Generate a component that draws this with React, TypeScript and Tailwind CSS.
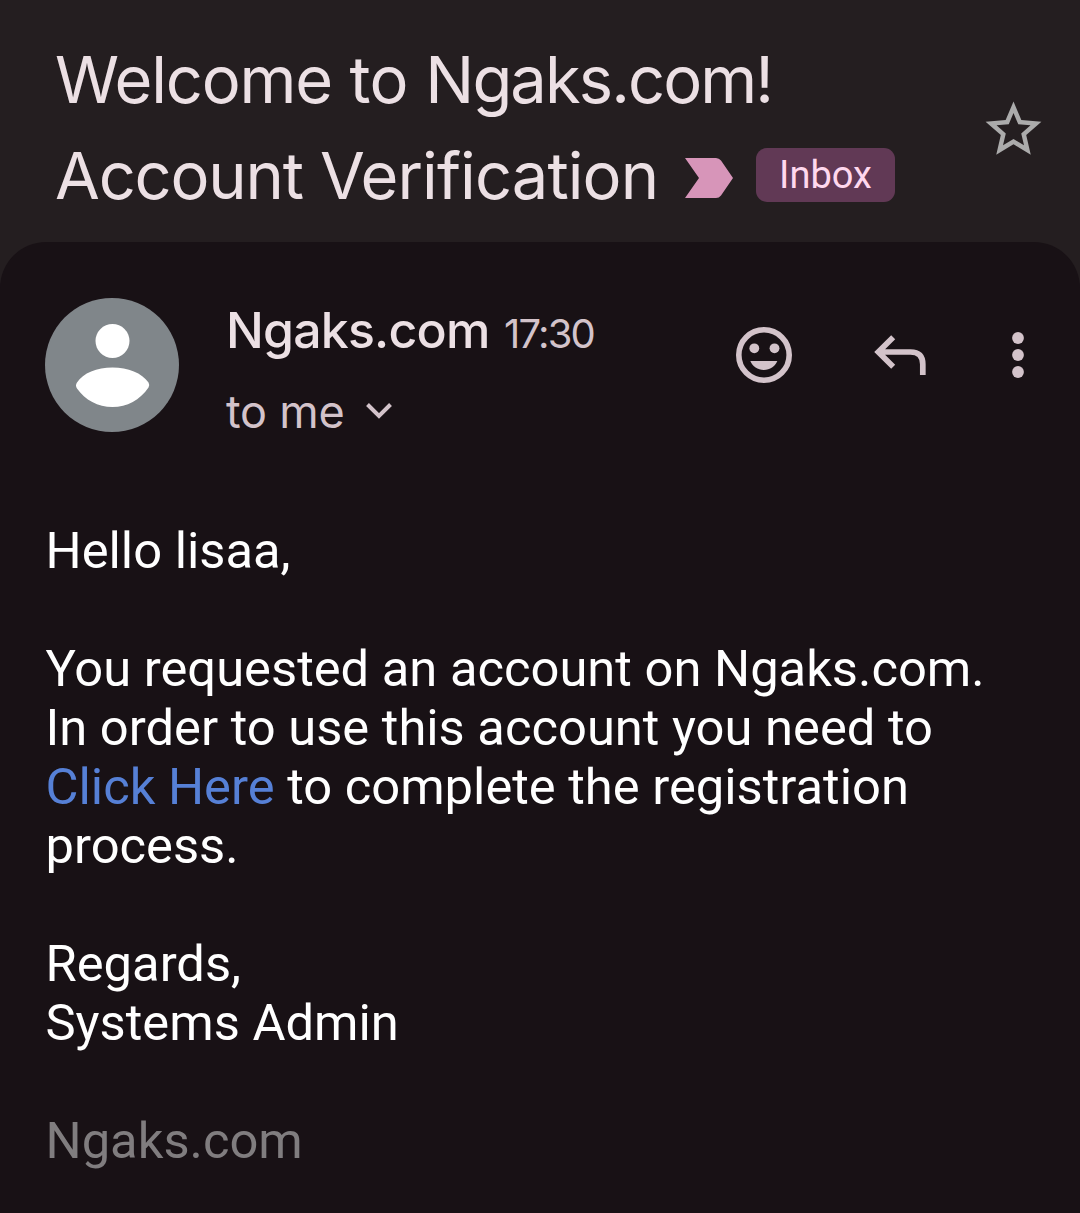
import React from "react";

function Star() {
  return (
    <svg className="h-[67px] w-[67px]" viewBox="0 0 24 24" fill="#ababab">
      <path d="M22 9.24l-7.19-.62L12 2 9.19 8.63 2 9.24l5.46 4.73L5.82 21 12 17.27 18.18 21l-1.63-7.03L22 9.24zM12 15.4l-3.76 2.27 1-4.28-3.32-2.88 4.38-.38L12 6.1l1.71 4.04 4.38.38-3.32 2.88 1 4.28L12 15.4z" />
    </svg>
  );
}

function Avatar() {
  return (
    <svg className="h-[134px] w-[134px] shrink-0" viewBox="0 0 134 134">
      <circle cx="67" cy="67" r="67" fill="#80868a" />
      <circle cx="67.5" cy="43" r="17" fill="#fff" />
      <path d="M32 84.500C38 75 52 69.500 67.500 69.500S97 75 103.500 84.500Q105 87 103.500 89.500C95 102 82 109 67.500 109S40 102 32 90.500Q30 87.500 32 84.500Z" fill="#fff" />
    </svg>
  );
}

function Smiley() {
  return (
    <svg className="h-[56px] w-[56px]" viewBox="0 0 56 56" fill="#d3c3ca">
      <circle cx="28" cy="28" r="25.200" fill="none" stroke="#d3c3ca" strokeWidth="5.600" />
      <circle cx="18.300" cy="21.300" r="4.900" />
      <circle cx="38.500" cy="21.300" r="4.900" />
      <path d="M14.300 34H41.300C39 39.500 34 43 27.800 43S16.600 39.500 14.300 34Z" />
    </svg>
  );
}

function Reply() {
  return (
    <svg className="h-[40px] w-[52px]" viewBox="0 0 52 40" fill="none" stroke="#d3c3ca" strokeWidth="5.700">
      <path d="M19.200 2.200L4.300 17L19.200 31.700M4.300 17H36.500Q48.800 17 48.800 29.300V40" />
    </svg>
  );
}

function More() {
  return (
    <svg className="h-[46px] w-[12px]" viewBox="0 0 12 46" fill="#d3c3ca">
      <circle cx="6" cy="6" r="5.900" />
      <circle cx="6" cy="23" r="5.900" />
      <circle cx="6" cy="40" r="5.900" />
    </svg>
  );
}

export default function App() {
  return (
    <div className="flex h-[1213px] w-[1080px] flex-col overflow-hidden bg-[#241e20] font-['Inter',sans-serif]">
      <header className="flex h-[242px] shrink-0 justify-between pr-[33.500px] pl-[55px] pt-8">
        <h1 className="text-[65px] leading-[96px] font-normal whitespace-nowrap text-[#ece0e4]">
          <div>
            <span className="tracking-[-1.200px]">Welcome</span>
            <span className="tracking-[-0.700px]"> to </span>
            <span className="tracking-[-1.900px]">Ngaks.com!</span>
          </div>
          <div className="flex">
            <span className="w-[630px]">
              <span className="tracking-[-1.200px]">Account </span>
              <span className="tracking-[-0.900px]">Verification</span>
            </span>
            <svg className="mt-[30px] h-[40px] w-[48px]" viewBox="0 0 48 40" fill="#d795b9">
              <path d="M0 0H31Q34 0 36 2.500L48 20L36 37.500Q34 40 31 40H0L14 20Z" />
            </svg>
            <span className="mt-5 ml-[23px] flex h-[54px] w-[139px] items-center justify-center rounded-[11px] bg-[#613955] font-['Roboto',sans-serif] text-[38px] leading-none text-[#ffd8ee]">
              Inbox
            </span>
          </div>
        </h1>
        <div className="pt-[64px]">
          <Star />
        </div>
      </header>

      <main className="grow rounded-t-[46px] bg-[#181115]">
        <section className="flex pt-14 pl-[45px]">
          <Avatar />
          <div className="ml-[47px] w-[509px] whitespace-nowrap">
            <div className="flex items-baseline leading-[64px]">
              <span className="w-[278px] text-[50px] font-medium tracking-[-0.800px] text-[#ece0e4]">Ngaks.com</span>
              <span className="text-[40px] tracking-[-1.800px] text-[#d3c3ca]">17:30</span>
            </div>
            <div className="mt-[14px] flex items-center text-[45px] leading-[64px] text-[#d3c3ca]">
              <span className="w-[140px] tracking-[-0.200px]">to me</span>
              <svg className="mb-[3px] h-[16px] w-[26px]" viewBox="0 0 26 16" fill="none" stroke="#d3c3ca" strokeWidth="4">
                <path d="M1.500 1.500L13 13L24.500 1.500" />
              </svg>
            </div>
          </div>
          <div className="ml-px flex h-[114px] items-center">
            <Smiley />
            <div className="ml-[82px]">
              <Reply />
            </div>
            <div className="ml-[86px]">
              <More />
            </div>
          </div>
        </section>

        <article className="mt-[77px] pl-[45.500px] font-['Roboto',sans-serif] text-[50.700px] leading-[59px] whitespace-nowrap text-white">
          <p>Hello lisaa,</p>
          <p className="mt-[59px]">
            You requested an account on Ngaks.com.
            <br />
            In order to use this account you need to
            <br />
            <a className="text-[#5680d6]">Click Here</a> to complete the registration
            <br />
            process.
          </p>
          <p className="mt-[59px]">
            Regards,
            <br />
            Systems Admin
          </p>
          <p className="mt-[59px] text-[#807d7f]">Ngaks.com</p>
        </article>
      </main>
    </div>
  );
}
